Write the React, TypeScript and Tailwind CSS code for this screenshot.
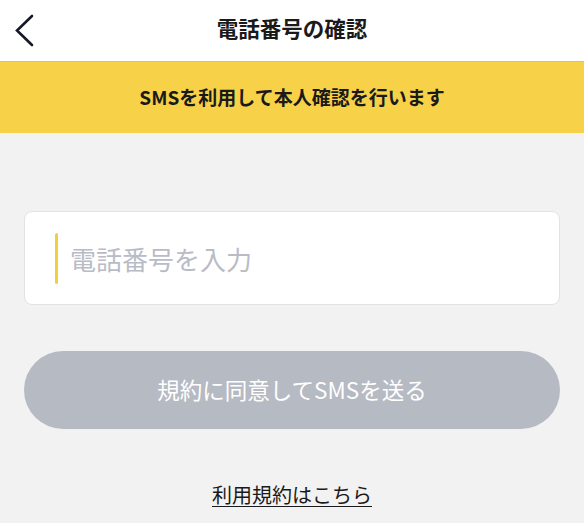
export default function App() {
  const font = { fontFamily: '"Noto Sans CJK JP", "Noto Sans", sans-serif' };

  return (
    <div className="w-[584px] h-[523px] bg-[#f2f2f2] overflow-hidden" style={font}>
      <header className="relative h-[61px] bg-white flex items-center justify-center">
        <button className="absolute left-[10px] top-[9px] p-1" aria-label="戻る">
          <svg width="22" height="34" viewBox="0 0 22 34" fill="none">
            <path d="M18 3 L3 17.5 L18 32" stroke="#161827" strokeWidth="2.6" strokeLinecap="round" strokeLinejoin="miter" />
          </svg>
        </button>
        <h1 className="text-[21.5px] font-bold text-[#1a1a1a] -mt-[4px]">電話番号の確認</h1>
      </header>

      <div className="h-[72px] bg-[#f7d147] border-t border-[#d8c17b] flex items-center justify-center">
        <p className="text-[19px] font-bold text-[#1a1a1a]">SMSを利用して本人確認を行います</p>
      </div>

      <div className="px-[24px] pt-[78px]">
        <div className="h-[94px] bg-white rounded-[8px] border border-[#e3e3e3] flex items-center pl-[30px]">
          <span className="w-[3px] h-[51px] rounded-full bg-[#f5cf3a]" />
          <input
            className="ml-[12px] flex-1 bg-transparent outline-none text-[26px] text-[#333] placeholder:text-[#b9bcc5]"
            placeholder="電話番号を入力"
            style={font}
          />
        </div>

        <button className="mt-[46px] w-full h-[78px] rounded-full bg-[#b6bac3] text-white text-[22.5px] flex items-center justify-center">
          規約に同意してSMSを送る
        </button>

        <div className="mt-[51px] flex justify-center">
          <a className="text-[20px] text-[#1a1a1a] underline underline-offset-[3px] decoration-[1px]" href="#">
            利用規約はこちら
          </a>
        </div>
      </div>
    </div>
  );
}
